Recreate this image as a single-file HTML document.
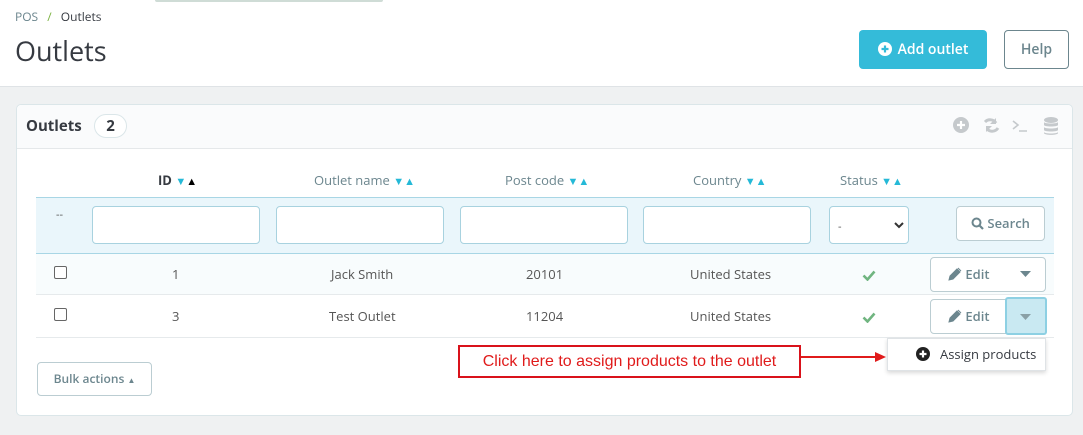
<!DOCTYPE html>
<html><head><meta charset="utf-8"><style>
*{box-sizing:border-box;margin:0;padding:0}
body{width:1083px;height:435px;overflow:hidden;background:#eff1f2;font-family:"Open Sans","Liberation Sans",sans-serif;color:#363a41;position:relative}
.a{position:absolute}
.hdr{left:0;top:0;width:1083px;height:87px;background:#fff;border-bottom:1px solid #dfe3e6}
.panel{left:16px;top:104px;width:1057px;height:312px;background:#fff;border:1px solid #dbe6e9;border-radius:5px}
.ph{left:0;top:0;width:100%;height:44px;background:#fafbfc;border-bottom:1px solid #e5e8ea;border-radius:5px 5px 0 0}
.th{font-size:13px;color:#6c868e;top:171px}
.c{color:#25b9d7;font-size:11px}
.inp{top:206px;height:38px;background:#fff;border:1px solid #a8d2df;border-radius:4px}
.td{font-size:13px;color:#555;}
.btn{background:#fff;border:1px solid #bbcdd2;border-radius:4px;color:#6c868e;font-size:13px;font-weight:600}
.cb{width:13px;height:13px;border:1px solid #666;border-radius:2px;background:#fff}
</style></head><body>
<div class="a hdr"></div>
<div class="a" style="left:155px;top:0;width:228px;height:2px;background:#cfdcd6;border-radius:0 0 3px 3px"></div>
<div class="a" style="left:15px;top:8px;font-size:12px;color:#6c868e">POS <span style="color:#7cb342;margin:0 6px">/</span> <span style="color:#363a41">Outlets</span></div>
<div class="a" style="left:15px;top:32px;font-size:27px;color:#363a41">Outlets</div>
<div class="a" style="left:859px;top:30px;width:128px;height:39px;background:#34bbd9;border-radius:4px;color:#fff;font-size:14px;font-weight:600;line-height:39px;text-align:center"><svg width="14" height="14" viewBox="0 0 14 14" style="vertical-align:-2px;margin-right:6px"><circle cx="7" cy="7" r="7" fill="#fff"/><path d="M7 3.5v7M3.5 7h7" stroke="#34bbd9" stroke-width="2.2"/></svg>Add outlet</div>
<div class="a" style="left:1004px;top:30px;width:65px;height:39px;border:1px solid #6c868e;border-radius:4px;color:#6c868e;font-size:14px;font-weight:600;line-height:37px;text-align:center;background:#fff">Help</div>

<div class="a panel"><div class="a ph"></div></div>
<div class="a" style="left:26px;top:116px;font-size:15px;font-weight:700;color:#363a41">Outlets</div>
<div class="a" style="left:94px;top:114px;width:33px;height:24px;border:1px solid #dbe6e9;border-radius:12px;text-align:center;font-weight:700;font-size:15px;line-height:22px;color:#363a41;background:#fff">2</div>
<svg class="a" style="left:952px;top:116px" width="110" height="20" viewBox="0 0 110 20">
<circle cx="9" cy="9" r="8" fill="#c5c9cc"/><path d="M9 5v8M5 9h8" stroke="#fff" stroke-width="2.2"/>
<path d="M33 6a7 7 0 0 1 11 1M46 12a7 7 0 0 1-11 1" stroke="#c5c9cc" stroke-width="3" fill="none"/><path d="M44 2v6h-6zM34 16v-6h6z" fill="#c5c9cc"/>
<path d="M61 5l5 4-5 4M67 15h8" stroke="#c5c9cc" stroke-width="1.6" fill="none"/>
<ellipse cx="99" cy="4" rx="7" ry="3" fill="#c5c9cc"/><path d="M92 6v3c0 2 14 2 14 0V6c0 2-14 2-14 0zM92 11v3c0 2 14 2 14 0v-3c0 2-14 2-14 0zM92 16v1c0 2.5 14 2.5 14 0v-1c0 2-14 2-14 0z" fill="#c5c9cc"/>
</svg>

<div class="a th" style="left:158px;font-weight:700;color:#363a41">ID <span class="c">▼</span><span style="font-size:11px;color:#000">▲</span></div>
<div class="a th" style="left:314px">Outlet name <span class="c">▼▲</span></div>
<div class="a th" style="left:505px">Post code <span class="c">▼▲</span></div>
<div class="a th" style="left:693px">Country <span class="c">▼▲</span></div>
<div class="a th" style="left:840px">Status <span class="c">▼▲</span></div>

<div class="a" style="left:36px;top:197px;width:1018px;height:57px;background:#eaf6fb;border-top:1px solid #a8d6e5;border-bottom:1px solid #a8d6e5"></div>
<div class="a" style="left:56px;top:207px;font-size:11px;color:#555">--</div>
<div class="a inp" style="left:92px;width:168px"></div>
<div class="a inp" style="left:276px;width:168px"></div>
<div class="a inp" style="left:460px;width:168px"></div>
<div class="a inp" style="left:643px;width:168px"></div>
<div class="a inp" style="left:829px;width:80px;font-size:11px;padding:12px 8px;color:#555">-<svg class="a" style="left:64px;top:15px" width="10" height="7"><path d="M1 1l4 4 4-4" stroke="#333" stroke-width="2" fill="none"/></svg></div>
<div class="a btn" style="left:956px;top:206px;width:89px;height:35px;line-height:33px;text-align:center"><svg width="13" height="13" viewBox="0 0 13 13" style="vertical-align:-2px"><circle cx="5.5" cy="5.5" r="4" stroke="#6c868e" stroke-width="2" fill="none"/><path d="M8.5 8.5l3.5 3.5" stroke="#6c868e" stroke-width="2.2"/></svg> Search</div>

<div class="a" style="left:36px;top:254px;width:1018px;height:41px;background:#f8fcfd;border-bottom:1px solid #e6eaec"></div>
<div class="a" style="left:36px;top:295px;width:1018px;height:43px;border-bottom:1px solid #e6eaec"></div>
<div class="a cb" style="left:54px;top:266px"></div>
<div class="a cb" style="left:54px;top:308px"></div>
<div class="a td" style="left:172px;top:265px">1</div>
<div class="a td" style="left:172px;top:307px">3</div>
<div class="a td" style="left:331px;top:265px">Jack Smith</div>
<div class="a td" style="left:329px;top:307px">Test Outlet</div>
<div class="a td" style="left:526px;top:265px">20101</div>
<div class="a td" style="left:526px;top:307px">11204</div>
<div class="a td" style="left:690px;top:265px">United States</div>
<div class="a td" style="left:690px;top:307px">United States</div>
<svg class="a" style="left:862px;top:270px" width="14" height="11"><path d="M1.5 5.5l4 4 7-8" stroke="#70b580" stroke-width="2.6" fill="none"/></svg>
<svg class="a" style="left:862px;top:312px" width="14" height="11"><path d="M1.5 5.5l4 4 7-8" stroke="#70b580" stroke-width="2.6" fill="none"/></svg>

<div class="a btn" style="left:930px;top:257px;width:116px;height:35px"></div>
<div class="a btn" style="left:930px;top:299px;width:116px;height:35px"></div>
<div class="a" style="left:1005px;top:297px;width:42px;height:38px;background:#c9e9f2;border:2px solid #8dd0e3;border-radius:3px"></div>
<div class="a" style="left:948px;top:265px;font-size:13px;font-weight:600;color:#6c868e"><svg width="14" height="14" viewBox="0 0 14 14" style="vertical-align:-2px"><path d="M1 13l1-4 7-7 3 3-7 7z M10 1l3 3" fill="#6c868e" stroke="#6c868e"/></svg> Edit</div>
<div class="a" style="left:948px;top:307px;font-size:13px;font-weight:600;color:#6c868e"><svg width="14" height="14" viewBox="0 0 14 14" style="vertical-align:-2px"><path d="M1 13l1-4 7-7 3 3-7 7z M10 1l3 3" fill="#6c868e" stroke="#6c868e"/></svg> Edit</div>
<svg class="a" style="left:1020px;top:271px" width="11" height="6"><path d="M0 0h11l-5.5 6z" fill="#6c868e"/></svg>
<svg class="a" style="left:1020px;top:314px" width="11" height="6"><path d="M0 0h11l-5.5 6z" fill="#8aa0a6"/></svg>

<div class="a" style="left:887px;top:338px;width:159px;height:33px;background:#fff;border:1px solid #dfe3e6;box-shadow:0 2px 4px rgba(0,0,0,.15);font-size:13px;color:#363a41;line-height:31px;padding-left:28px"><svg width="14" height="14" viewBox="0 0 14 14" style="vertical-align:-2px;margin-right:10px"><circle cx="7" cy="7" r="7" fill="#222"/><path d="M7 3.5v7M3.5 7h7" stroke="#fff" stroke-width="2.2"/></svg>Assign products</div>

<div class="a" style="left:458px;top:345px;width:343px;height:33px;border:2px solid #d9121b;background:#fff;color:#e01b1b;font-family:'Liberation Sans',sans-serif;font-size:16px;line-height:29px;text-align:center">Click here to assign products to the outlet</div>
<svg class="a" style="left:801px;top:351px" width="86" height="12"><path d="M0 6h76" stroke="#e01b1b" stroke-width="2"/><path d="M74 1l11 5-11 5z" fill="#e01b1b"/></svg>

<div class="a btn" style="left:37px;top:362px;width:115px;height:34px;line-height:32px;text-align:center;font-size:12px">Bulk actions <span style="font-size:8px">▲</span></div>
</body></html>
